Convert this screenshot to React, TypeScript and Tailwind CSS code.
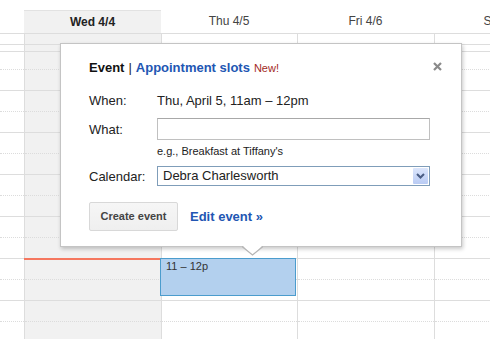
import React from 'react';

type Col = { key: string; label: string; width: string; today?: boolean };

const COLS: Col[] = [
  { key: 'wed', label: 'Wed 4/4', width: 'w-[137px]', today: true },
  { key: 'thu', label: 'Thu 4/5', width: 'w-[136px]' },
  { key: 'fri', label: 'Fri 4/6', width: 'w-[137px]' },
  { key: 'sat', label: 'Sat 4/7', width: 'w-[137px]' },
];

const SLOTS = Array.from({ length: 14 }, (_, i) => i);

function Slots() {
  return (
    <div className="flex-1 overflow-hidden">
      <div className="-mt-[3px]">
        {SLOTS.map((i) => (
          <div
            key={i}
            className={`h-[21px] border-b ${i % 2 === 0 ? 'border-dotted border-[#dcdcdc]' : 'border-solid border-[#dddddd]'}`}
          />
        ))}
      </div>
    </div>
  );
}

function DayColumn({ col, first }: { col: Col | null; first?: boolean }) {
  const width = col ? col.width : 'w-[24px]';
  return (
    <div
      className={`flex shrink-0 flex-col ${width} ${first ? '' : 'border-l border-[#dddddd]'} ${col?.today ? 'bg-[#f1f1f1]' : ''}`}
    >
      <div className="h-[11px] border-b border-[#dddddd]" />
      <div className="h-[7px] border-b border-[#dddddd]" />
      <Slots />
    </div>
  );
}

function EventPopup() {
  return (
    <div className="absolute left-[60px] top-[43px] h-[204px] w-[402px] border border-[#c4c4c4] bg-white pl-[28px] text-[13px] text-[#222] shadow-[1px_2px_4px_rgba(0,0,0,0.22)]">
      <div className="mt-[16px] flex h-[15px] items-baseline leading-[15px]">
        <span className="font-bold text-[#111]">Event</span>
        <span className="mx-[4px] text-[#222]">|</span>
        <span className="font-bold text-[#2256b3]">Appointment slots</span>
        <span className="ml-[4px] text-[11px] text-[#a32a24]">New!</span>
      </div>

      <div className="mt-[18px] flex h-[15px] leading-[15px]">
        <span className="w-[68px] shrink-0">When:</span>
        <span>Thu, April 5, 11am – 12pm</span>
      </div>

      <div className="mt-[10px] flex h-[22px] items-center leading-[15px]">
        <span className="w-[68px] shrink-0">What:</span>
        <div className="h-[22px] w-[273px] border border-[#c0c0c0] border-t-[#a8a8a8] bg-white" />
      </div>

      <div className="mt-[5px] pl-[68px] text-[11px] leading-[13px] text-[#222]">
        e.g., Breakfast at Tiffany&apos;s
      </div>

      <div className="mt-[8px] flex h-[20px] items-center leading-[15px]">
        <span className="w-[68px] shrink-0">Calendar:</span>
        <div className="flex h-[20px] w-[273px] items-stretch border border-[#7f9db9] bg-white p-px">
          <span className="flex-1 pl-[4px] leading-[16px] text-[#222]">Debra Charlesworth</span>
          <span className="flex w-[15px] items-center justify-center rounded-[1px] bg-gradient-to-b from-[#dce6fc] to-[#b9cbf4]">
            <svg width="9" height="6" viewBox="0 0 9 6">
              <polyline points="1,1 4.5,4.5 8,1" fill="none" stroke="#4a5d84" strokeWidth="2" />
            </svg>
          </span>
        </div>
      </div>

      <div className="mt-[16px] flex h-[29px] items-center">
        <button
          type="button"
          className="h-[29px] w-[89px] rounded-[2px] border border-[#d8d8d8] bg-gradient-to-b from-[#f6f6f6] to-[#efefef] text-[11px] font-bold text-[#444]"
        >
          Create event
        </button>
        <span className="ml-[12px] font-bold text-[#2256b3]">Edit event »</span>
      </div>

      <svg className="absolute right-[19px] top-[18px]" width="9" height="9" viewBox="0 0 9 9">
        <path d="M1 1 L8 8 M8 1 L1 8" stroke="#8a8a8a" strokeWidth="2.2" />
      </svg>

      <svg className="absolute left-[181px] top-[201px]" width="21" height="11" viewBox="0 0 21 11">
        <polygon points="0,0 21,0 10.5,10" fill="#ffffff" />
        <polyline points="0,1.5 10.5,10 21,1.5" fill="none" stroke="#b4b4b4" strokeWidth="1.2" />
      </svg>
    </div>
  );
}

export default function App() {
  return (
    <div className="relative h-[339px] w-[490px] overflow-hidden bg-white font-['Liberation_Sans',Arial,sans-serif]">
      <div className="h-[10px]" />

      <div className="flex h-[24px] border-b border-[#dddddd] text-[12px] leading-[23px]">
        <div className="w-[24px] shrink-0" />
        {COLS.map((col) => (
          <div
            key={col.key}
            className={`shrink-0 text-center ${col.key === 'wed' ? 'w-[137px]' : col.width} ${
              col.today ? 'border-t border-[#e2e2e2] bg-[#f1f1f1] font-bold text-[#222]' : 'text-[#444]'
            }`}
          >
            {col.label}
          </div>
        ))}
      </div>

      <div className="flex h-[305px]">
        <DayColumn col={null} first />
        {COLS.map((col) => (
          <DayColumn key={col.key} col={col} />
        ))}
      </div>

      <div className="absolute left-[24px] top-[258px] h-[2px] w-[137px] bg-[#f5775f]" />

      <div className="absolute left-[160px] top-[258px] h-[38px] w-[136px] border border-[#4b9ccd] bg-[#b3d0ee] pl-[5px] pt-px text-[11px] leading-[13px] text-[#333]">
        11 – 12p
      </div>

      <EventPopup />
    </div>
  );
}
